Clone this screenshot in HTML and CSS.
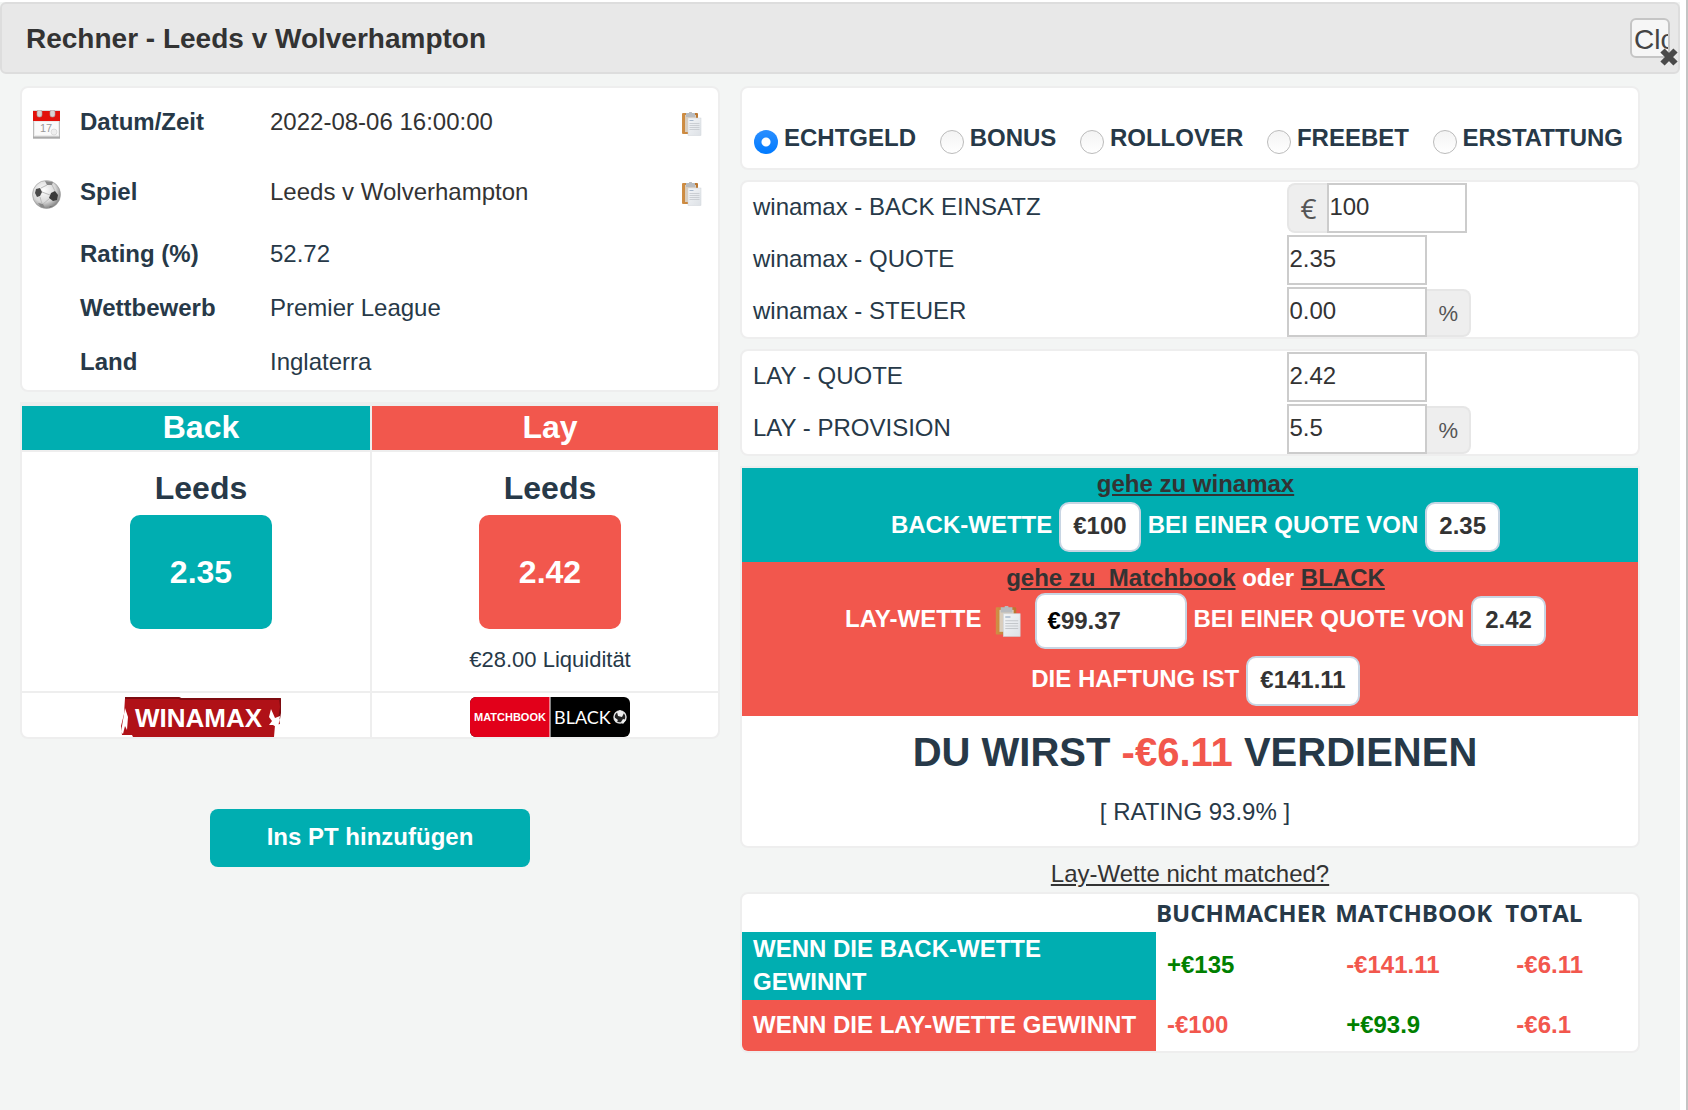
FILE: index.html
```html
<!DOCTYPE html>
<html lang="de">
  <head>
    <meta charset="UTF-8" />
    <meta name="viewport" content="width=device-width, initial-scale=1.0" />
    <title>Rechner - Leeds v Wolverhampton</title>
    <link rel="stylesheet" href="styles.css">
  </head>
  <body>
    <!-- Shared icons -->
    <svg class="sprite" aria-hidden="true">
      <defs>
        <linearGradient id="board" x1="0" y1="0" x2="1" y2="0">
          <stop offset="0" stop-color="#d08f45" />
          <stop offset="1" stop-color="#b9752f" />
        </linearGradient>
        <linearGradient id="paper" x1="0" y1="0" x2="1" y2="1">
          <stop offset="0" stop-color="#f3f5f7" />
          <stop offset="1" stop-color="#dde1e6" />
        </linearGradient>
        <radialGradient id="ball" cx="0.4" cy="0.35" r="0.7">
          <stop offset="0" stop-color="#ffffff" />
          <stop offset="0.6" stop-color="#d8d8d8" />
          <stop offset="1" stop-color="#777777" />
        </radialGradient>
        <symbol id="clipboard" viewBox="0 0 20 24">
          <rect x="0" y="1" width="16" height="21" rx="1" fill="url(#board)" />
          <rect x="3" y="3" width="11" height="17" fill="#d9cdbd" />
          <path d="M4 1h3a1.5 1.5 0 0 1 3 0h3v4H4z" fill="#b8bbbf" />
          <rect x="6" y="6" width="13" height="17.5" fill="url(#paper)" stroke="#cfd4d9" stroke-width="0.5" />
          <path d="M7.5 8.5h4" stroke="#a8b8cc" />
          <path d="M7.5 11.5h10M7.5 13.5h10M7.5 15.5h10M7.5 17.5h10" stroke="#c3c7cb" stroke-width="0.8" />
        </symbol>
      </defs>
    </svg>

    <div class="dialog">
      <header class="titlebar">
        <h1>Rechner - Leeds v Wolverhampton</h1>
        <button type="button" class="close">Close</button>
        <svg class="close-icon" viewBox="0 0 18 18" aria-hidden="true">
          <path d="M2.5 2.5l13 13M15.5 2.5l-13 13" stroke="#4a4a4a" stroke-width="6" />
        </svg>
      </header>

      <main class="content">
        <!-- Left column: event info and odds -->
        <div class="column">
          <section class="card">
            <table class="info">
              <tr class="tall">
                <td class="icon">
                  <svg width="29" height="29" viewBox="0 0 29 29" aria-hidden="true">
                    <rect x="1.5" y="1" width="26" height="27" fill="#ececec" stroke="#bbb" />
                    <rect x="3" y="12" width="23" height="13" fill="#fafafa" />
                    <rect x="1" y="1" width="27" height="10" fill="#e3120b" />
                    <rect x="5" y="0" width="5" height="7" rx="2" fill="#d9d4d2" stroke="#a99" stroke-width="0.6" />
                    <rect x="18" y="0" width="5" height="7" rx="2" fill="#d9d4d2" stroke="#a99" stroke-width="0.6" />
                    <text x="8" y="22" class="cal-day">17</text>
                    <circle cx="22" cy="22" r="3" fill="#eee" stroke="#ccc" stroke-width="0.6" />
                    <path d="M1 27.5h27" stroke="#aaa" stroke-width="2" />
                  </svg>
                </td>
                <th scope="row">Datum/Zeit</th>
                <td class="dark">2022-08-06 16:00:00</td>
                <td class="copy"><button type="button" aria-label="Datum kopieren"><svg width="20" height="24"><use href="#clipboard" /></svg></button></td>
              </tr>
              <tr class="tall">
                <td class="icon">
                  <svg width="29" height="29" viewBox="0 0 29 29" aria-hidden="true">
                    <circle cx="14.5" cy="14.5" r="14" fill="url(#ball)" stroke="#999" stroke-width="0.6" />
                    <path d="M4 9l4-1 2 4-2 4-3 1-2-4z" fill="#4a4a4a" />
                    <path d="M19 13l4-2 3 4-1 5-4 1-4-3z" fill="#3a3a3a" />
                    <path d="M13 1l8 1-1 3-5 0z" fill="#888" />
                    <path d="M6 23l5 1 2 4-4-1z" fill="#888" />
                    <path d="M21 26l-4 2 1-2z" fill="#777" />
                    <path d="M10 12l8 3M15 5l-6 3M8 17l2 7M17 19l-6 5M23 11l-3-6" stroke="#bbb" fill="none" />
                  </svg>
                </td>
                <th scope="row">Spiel</th>
                <td class="dark">Leeds v Wolverhampton</td>
                <td class="copy"><button type="button" aria-label="Spiel kopieren"><svg width="20" height="24"><use href="#clipboard" /></svg></button></td>
              </tr>
              <tr>
                <td class="icon"></td>
                <th scope="row">Rating (%)</th>
                <td>52.72</td>
                <td></td>
              </tr>
              <tr>
                <td class="icon"></td>
                <th scope="row">Wettbewerb</th>
                <td>Premier League</td>
                <td></td>
              </tr>
              <tr>
                <td class="icon"></td>
                <th scope="row">Land</th>
                <td>Inglaterra</td>
                <td></td>
              </tr>
            </table>
          </section>

          <section class="card odds-card">
            <table class="odds">
              <tr>
                <th class="back">Back</th>
                <th class="lay">Lay</th>
              </tr>
              <tr class="prices">
                <td>
                  <div class="team">Leeds</div>
                  <div class="price back">2.35</div>
                </td>
                <td>
                  <div class="team">Leeds</div>
                  <div class="price lay">2.42</div>
                  <div class="liquidity">€28.00 Liquidität</div>
                </td>
              </tr>
              <tr class="logos">
                <td>
                  <svg width="160" height="40" viewBox="0 0 160 40" role="img" aria-label="Winamax">
                    <path d="M4 1l54 0 2 1h99l1 8-2 12 1 5-5 1-1 12H12l-1-2H1l-1-9 3-12z" fill="#b01117" />
                    <path d="M4 1l54 0 2 1h99l1 8-2 12" fill="none" stroke="#7d0b10" stroke-width="2" />
                    <path d="M4 11l3 9-1 13-2-4-2 8-2-2z" fill="#fff" />
                    <path d="M150 12l4 9 5-2-2 12-5-3-4 0 3-4-3-4z" fill="#fff" />
                    <text x="14" y="30" class="winamax">WINAMAX</text>
                  </svg>
                </td>
                <td>
                  <svg width="160" height="40" viewBox="0 0 160 40" role="img" aria-label="Matchbook Black">
                    <rect width="160" height="40" rx="6" fill="#000" />
                    <path d="M6 0h74v40H6a6 6 0 0 1-6-6V6a6 6 0 0 1 6-6z" fill="#e2001a" />
                    <path d="M80 0v40" stroke="#fff" stroke-width="1" />
                    <text x="4" y="24" class="matchbook">MATCHBOOK</text>
                    <text x="84" y="27" class="black">BLACK</text>
                    <circle cx="150" cy="20" r="6" fill="#222" stroke="#ddd" stroke-width="1.5" />
                    <path d="M150 13l4 3-2 4-4-1-1-4zM153 22l3 1-3 4-2-2zM144 20l4 3-2 3z" fill="#eee" />
                  </svg>
                </td>
              </tr>
            </table>
          </section>

          <button type="button" class="add">Ins PT hinzufügen</button>
        </div>

        <!-- Right column: calculator -->
        <div class="column">
          <section class="card modes">
            <label><input type="radio" name="mode" checked />ECHTGELD</label>
            <label><input type="radio" name="mode" />BONUS</label>
            <label><input type="radio" name="mode" />ROLLOVER</label>
            <label><input type="radio" name="mode" />FREEBET</label>
            <label><input type="radio" name="mode" />ERSTATTUNG</label>
          </section>

          <section class="card fields">
            <label for="stake">winamax - BACK EINSATZ</label>
            <div class="field"><span class="addon before">€</span><input type="text" id="stake" value="100" /></div>
            <label for="back-odds">winamax - QUOTE</label>
            <div class="field"><input type="text" id="back-odds" value="2.35" /></div>
            <label for="tax">winamax - STEUER</label>
            <div class="field"><input type="text" id="tax" value="0.00" /><span class="addon after">%</span></div>
          </section>

          <section class="card fields">
            <label for="lay-odds">LAY - QUOTE</label>
            <div class="field"><input type="text" id="lay-odds" value="2.42" /></div>
            <label for="commission">LAY - PROVISION</label>
            <div class="field"><input type="text" id="commission" value="5.5" /><span class="addon after">%</span></div>
          </section>

          <section class="card bets">
            <div class="bet back">
              <div class="goto"><a href="#">gehe zu winamax</a></div>
              <div class="line">
                <span>BACK-WETTE</span>
                <span class="chip">€100</span>
                <span>BEI EINER QUOTE VON</span>
                <span class="chip">2.35</span>
              </div>
            </div>
            <div class="bet lay">
              <div class="goto"><a href="#">gehe zu &nbsp;Matchbook</a> oder <a href="#">BLACK</a></div>
              <div class="line">
                <label for="lay-stake">LAY-WETTE</label>
                <button type="button" class="copy-stake" aria-label="Lay-Wette kopieren"><svg width="27" height="31" viewBox="0 0 20 24"><use href="#clipboard" /></svg></button>
                <span class="chip stake">€<input type="text" id="lay-stake" value="99.37" /></span>
                <span>BEI EINER QUOTE VON</span>
                <span class="chip">2.42</span>
              </div>
              <div class="line">
                <span>DIE HAFTUNG IST</span>
                <span class="chip">€141.11</span>
              </div>
            </div>
            <div class="profit">DU WIRST <span class="neg">-€6.11</span> VERDIENEN</div>
            <div class="rating">[ RATING 93.9% ]</div>
          </section>

          <div class="unmatched"><a href="#">Lay-Wette nicht matched?</a></div>

          <section class="card">
            <table class="results">
              <colgroup>
                <col class="col-outcome" />
                <col class="col-bookmaker" />
                <col class="col-exchange" />
                <col />
              </colgroup>
              <thead>
                <tr>
                  <td></td>
                  <th>BUCHMACHER</th>
                  <th>MATCHBOOK</th>
                  <th>TOTAL</th>
                </tr>
              </thead>
              <tbody>
                <tr>
                  <th scope="row" class="back">WENN DIE BACK-WETTE GEWINNT</th>
                  <td class="pos">+€135</td>
                  <td class="neg">-€141.11</td>
                  <td class="neg">-€6.11</td>
                </tr>
                <tr>
                  <th scope="row" class="lay">WENN DIE LAY-WETTE GEWINNT</th>
                  <td class="neg">-€100</td>
                  <td class="pos">+€93.9</td>
                  <td class="neg">-€6.1</td>
                </tr>
              </tbody>
            </table>
          </section>
        </div>
      </main>
    </div>
  </body>
</html>
```
FILE: styles.css
```css
/* General */
* {
  box-sizing: border-box;
}

body {
  display: flex;
  min-height: 100vh;
  margin: 0;
  padding: 2px 6px 0 0;
  border-right: 2px solid #c4c4c4;
  background: #fff;
  color: #273948;
  font-family: "Liberation Sans", Arial, sans-serif;
  font-size: 24px;
}

a {
  color: #333;
}

button {
  font-family: inherit;
  cursor: pointer;
}

.sprite {
  position: absolute;
  width: 0;
  height: 0;
}

.back {
  background: #00aeb1;
  color: #fff;
}

.lay {
  background: #f2574d;
  color: #fff;
}

.pos {
  color: #008000;
}

.neg {
  color: #f2574d;
}

/* Dialog */
.dialog {
  flex: 1;
  background: #f3f5f4;
}

.titlebar {
  position: relative;
  display: flex;
  justify-content: space-between;
  align-items: center;
  height: 72px;
  padding: 0 8px 0 24px;
  border: 2px solid #ddd;
  border-radius: 6px;
  background: #e8e8e8;
  color: #333;
}

.titlebar h1 {
  margin: 0;
  padding-top: 2px;
  font-size: 28px;
}

.close {
  width: 40px;
  height: 40px;
  padding: 4px 0 0 2px;
  overflow: hidden;
  border: 2px solid #c5c5c5;
  border-radius: 6px;
  background: #f6f6f6;
  color: #444;
  font-size: 28px;
  text-align: left;
}

.close-icon {
  position: absolute;
  right: 0;
  bottom: 6px;
  width: 18px;
  height: 18px;
}

.content {
  display: grid;
  grid-template-columns: 7fr 9fr;
  gap: 20px;
  padding: 12px 40px 40px 20px;
}

.card {
  margin-bottom: 10px;
  overflow: hidden;
  border: 2px solid #eee;
  border-radius: 8px;
  background: #fff;
}

/* Event info */
.info {
  width: 100%;
  border-collapse: collapse;
}

.info tr {
  height: 54px;
}

.info .tall {
  height: 70px;
}

.info th,
.info td {
  padding: 0 0 2px;
  text-align: left;
}

.info th {
  width: 190px;
}

.info .icon {
  width: 58px;
  padding: 2px 0 0 10px;
}

.info svg {
  display: block;
}

.info .dark {
  color: #333;
}

.info .copy {
  width: 36px;
  padding: 2px 0 0;
}

.copy button,
.copy-stake {
  display: block;
  padding: 0;
  border: 0;
  background: none;
}

.cal-day {
  font-size: 11px;
  fill: #999;
}

/* Odds */
.odds-card {
  border-top-width: 4px;
  border-top-left-radius: 0;
  border-top-right-radius: 0;
}

.odds {
  width: 100%;
  table-layout: fixed;
  border-spacing: 0;
  font-size: 32px;
}

.odds th,
.odds td {
  padding: 0 0 0 10px;
  border-bottom: 2px solid #eee;
  text-align: center;
  vertical-align: top;
}

.odds th {
  height: 46px;
  line-height: 42px;
}

.odds tr > :last-child {
  border-left: 2px solid #eee;
}

.prices {
  height: 240px;
}

.team {
  padding-top: 18px;
  font-weight: bold;
  line-height: 36px;
}

.price {
  width: 142px;
  margin: 9px auto 0;
  border-radius: 10px;
  font-weight: bold;
  line-height: 114px;
}

.liquidity {
  font-size: 22px;
  line-height: 62px;
}

.odds .logos td {
  padding-top: 4px;
  border-bottom: 0;
}

.logos svg {
  display: block;
  margin: 0 auto;
}

.winamax {
  font-size: 26px;
  font-weight: bold;
  fill: #fff;
}

.matchbook {
  font-size: 11px;
  font-weight: bold;
  fill: #fff;
}

.black {
  font-family: Lato, sans-serif;
  font-size: 18px;
  fill: #fff;
}

.add {
  display: block;
  width: 320px;
  height: 58px;
  margin: 70px auto 0;
  padding: 0 0 2px;
  border: 0;
  border-radius: 8px;
  background: #00aeb1;
  color: #fff;
  font-size: 24px;
  font-weight: bold;
}

/* Bet type */
.modes {
  display: flex;
  justify-content: space-between;
  padding: 34px 15px 14px 12px;
}

.modes label {
  display: flex;
  align-items: flex-end;
  gap: 6px;
  font-weight: bold;
  line-height: 32px;
}

.modes input {
  appearance: none;
  width: 24px;
  height: 24px;
  margin: 0;
  border: 1px solid #bbb;
  border-radius: 50%;
  background: linear-gradient(#f4f4f4, #fff);
}

.modes input:checked {
  border: 0;
  background: radial-gradient(circle, #fff 4px, transparent 5px), linear-gradient(#2b8fff, #007aff);
}

/* Calculator fields */
.fields {
  display: grid;
  grid-template-columns: 14fr 9fr;
  row-gap: 2px;
  padding-top: 1px;
}

.fields label {
  padding-left: 11px;
  line-height: 48px;
}

.field {
  display: flex;
  height: 50px;
}

.field input {
  width: 140px;
  padding: 0 0 2px;
  border: 2px solid #ccc;
  background: #fff;
  color: #333;
  font-family: inherit;
  font-size: 24px;
}

.addon {
  border: 2px solid #e6e6e6;
  background: #eee;
  color: #555;
  text-align: center;
}

.addon.before {
  width: 40px;
  border-right: 0;
  border-radius: 8px 0 0 8px;
  font-family: "Open Sans", sans-serif;
  font-size: 28px;
  line-height: 46px;
}

.addon.after {
  align-self: flex-end;
  width: 44px;
  height: 48px;
  border-left: 0;
  border-radius: 0 8px 8px 0;
  font-size: 22px;
  line-height: 46px;
}

/* Bets */
.bets {
  margin-bottom: 0;
  border-top-left-radius: 0;
  border-top-right-radius: 0;
  text-align: center;
}

.bet {
  padding: 0 0 10px 11px;
  font-weight: bold;
}

.goto {
  line-height: 32px;
}

.line {
  display: flex;
  justify-content: center;
  align-items: center;
  gap: 7px;
  height: 50px;
  margin-top: 2px;
  line-height: 46px;
}

.line + .line {
  margin-top: 10px;
}

.line > span:not(.chip),
.line > label {
  padding-bottom: 4px;
}

.chip {
  height: 50px;
  padding: 0 12px;
  border: 2px solid #c8d5e3;
  border-radius: 10px;
  background: #fff;
  color: #333;
  line-height: 44px;
}

.chip.stake {
  display: flex;
  flex: none;
  align-items: center;
  width: 152px;
  height: 56px;
  padding: 0 11px;
  color: #000;
}

.chip input {
  width: 100%;
  min-width: 0;
  padding: 0;
  border: 0;
  background: none;
  color: #333;
  font: inherit;
}

.copy-stake {
  margin: 0 6px;
}

.copy-stake svg {
  display: block;
}

.profit {
  padding-left: 10px;
  font-size: 40px;
  font-weight: bold;
  line-height: 72px;
}

.rating {
  padding: 0 0 10px 10px;
  line-height: 48px;
}

.unmatched {
  padding-top: 8px;
  line-height: 36px;
  text-align: center;
}

/* Results */
.results {
  width: 100%;
  table-layout: fixed;
  border-spacing: 0;
  font-weight: bold;
  text-align: left;
}

.results thead tr {
  height: 38px;
}

.results thead th {
  padding: 0;
  font-family: "Open Sans", sans-serif;
  line-height: 32px;
}

.results tbody th,
.results tbody td {
  padding: 0 0 2px 11px;
}

.results tbody th {
  line-height: 33px;
}

.results tbody tr {
  height: 68px;
}

.results tbody tr:last-child {
  height: 51px;
}

.col-outcome {
  width: 46.2%;
}

.col-bookmaker {
  width: 20%;
}

.col-exchange {
  width: 19%;
}
```
